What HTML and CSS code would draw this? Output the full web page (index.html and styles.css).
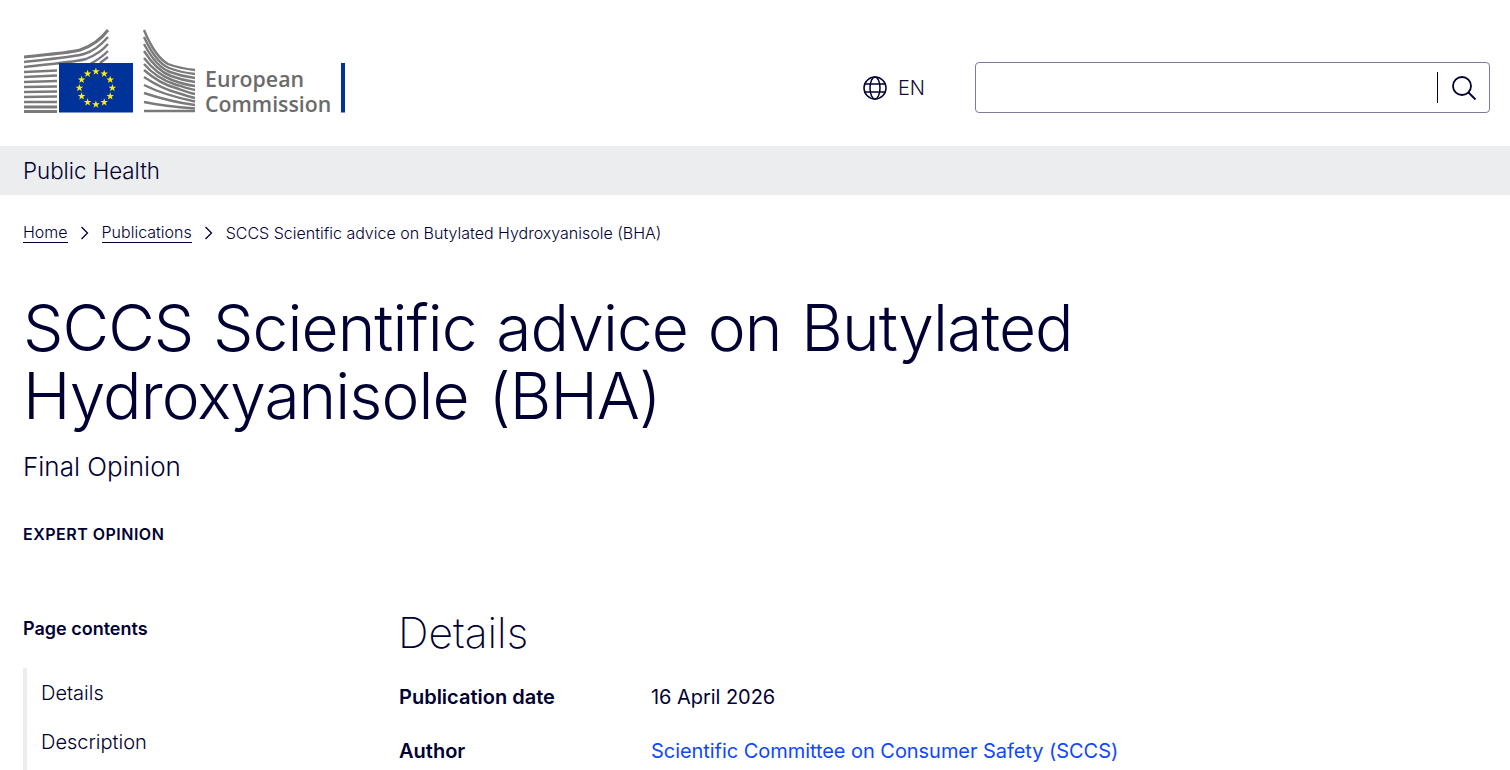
FILE: index.html
```html
<!DOCTYPE html>
<html lang="en">
<head>
  <meta charset="UTF-8">
  <title>SCCS Scientific advice on Butylated Hydroxyanisole (BHA)</title>
  <link rel="stylesheet" href="styles.css">
</head>
<body>

  <header class="site-header">
    <svg class="logo" width="322" height="92" viewBox="0 0 322 92">
      <defs>
        <path id="star" d="M0 -4L.94 -1.290L3.800 -1.240L1.520 .49L2.350 3.240L0 1.600L-2.350 3.240L-1.520 .49L-3.800 -1.240L-.94 -1.290z"/>
      </defs>
      <g fill="none" stroke="#7a7a7a" stroke-width="2.400">
        <path stroke-width="3" d="M0 28 C25 25 45 24 56 21 C68 17 78 9 84 1"/>
        <path d="M0 33 C25 30 50 28 60 25 C70 22 78 15 84 8"/>
        <path d="M0 38 C25 35 52 33 62 30 C72 26 79 21 84 15"/>
        <path d="M66 35 C74 31 80 26 84 22"/>
        <path d="M76 34 L84 28"/>
        <path d="M0 43 L33 41.500"/>
        <path d="M0 48 L33 46.500"/>
        <path d="M0 53 L33 52"/>
        <path d="M0 58 L33 57.500"/>
        <path d="M0 63 L33 62.500"/>
        <path d="M0 68 L33 67.500"/>
        <path d="M0 73 H33"/>
        <path stroke-width="3" d="M0 78 H33"/>
        <path stroke-width="3" d="M0 82.500 H33"/>
        <path d="M120 1 C127 18 135 30 144 35 C152 38 162 40 171 41"/>
        <path d="M120 8 C127 23 135 35 145 39 C153 42 162 44 171 45"/>
        <path d="M120 15 C127 28 135 39 146 43 C154 46 162 48 171 49"/>
        <path d="M120 22 C127 33 136 43 147 47 C155 50 163 52 171 53"/>
        <path d="M120 29 C127 38 137 47 148 51 C156 54 163 56 171 57"/>
        <path d="M120 35 C127 43 138 51 150 55 C157 57 164 60 171 61"/>
        <path d="M120 41 C128 48 140 56 152 59 C158 61 165 64 171 65"/>
        <path d="M120 48 C129 54 142 61 154 64 C160 66 166 68 171 69"/>
        <path d="M120 56 C130 61 144 67 171 72.500"/>
        <path d="M120 64 C132 68 148 73 171 76"/>
        <path d="M120 73 C134 76 150 78 171 79.500"/>
        <path stroke-width="2.600" d="M120 82 H171"/>
      </g>
      <rect x="35" y="34" width="74" height="49.500" fill="#003399"/>
      <g fill="#ffed00">
        <use href="#star" x="71.900" y="42.500"/>
        <use href="#star" x="80.200" y="44.700"/>
        <use href="#star" x="86.200" y="50.700"/>
        <use href="#star" x="88.400" y="59"/>
        <use href="#star" x="86.200" y="67.300"/>
        <use href="#star" x="80.200" y="73.300"/>
        <use href="#star" x="71.900" y="75.500"/>
        <use href="#star" x="63.600" y="73.300"/>
        <use href="#star" x="57.600" y="67.300"/>
        <use href="#star" x="55.400" y="59"/>
        <use href="#star" x="57.600" y="50.700"/>
        <use href="#star" x="63.600" y="44.700"/>
      </g>
      <text class="logo-text" x="181" y="58">European</text>
      <text class="logo-text" x="181" y="83">Commission</text>
      <rect x="317" y="34" width="4" height="49.500" fill="#003399"/>
    </svg>

    <div class="header-tools">
      <div class="lang">
        <svg width="24" height="24" viewBox="0 0 24 24" fill="none" stroke="#000032" stroke-width="1.500">
          <circle cx="12" cy="12" r="11"/>
          <ellipse cx="12" cy="12" rx="5" ry="11"/>
          <path d="M1.500 8H22.500M1.500 16H22.500"/>
        </svg>
        <span>EN</span>
      </div>
      <div class="search-box">
        <span class="search-divider"></span>
        <svg width="26" height="26" viewBox="0 0 26 26" fill="none" stroke="#000032" stroke-width="1.800">
          <circle cx="11" cy="11" r="9"/>
          <path d="M17.500 17.500L24.500 24.500"/>
        </svg>
      </div>
    </div>
  </header>

  <div class="site-bar">Public Health</div>

  <nav class="breadcrumb">
    <a href="#">Home</a>
    <svg class="crumb-arrow" width="10" height="14" viewBox="0 0 10 14"><path d="M1.500 1L7.500 7L1.500 13"/></svg>
    <a href="#">Publications</a>
    <svg class="crumb-arrow" width="10" height="14" viewBox="0 0 10 14"><path d="M1.500 1L7.500 7L1.500 13"/></svg>
    <span>SCCS Scientific advice on Butylated Hydroxyanisole (BHA)</span>
  </nav>

  <section class="page-head">
    <h1>SCCS Scientific advice on Butylated Hydroxyanisole (BHA)</h1>
    <p class="subtitle">Final Opinion</p>
    <p class="meta">EXPERT OPINION</p>
  </section>

  <div class="page-body">
    <aside class="toc">
      <h2>Page contents</h2>
      <ul>
        <li>Details</li>
        <li>Description</li>
      </ul>
    </aside>
    <main class="content">
      <h2>Details</h2>
      <dl>
        <dt>Publication date</dt>
        <dd>16 April 2026</dd>
        <dt>Author</dt>
        <dd><a href="#">Scientific Committee on Consumer Safety (SCCS)</a></dd>
      </dl>
    </main>
  </div>

</body>
</html>
```

FILE: styles.css
```css
html, body {
  height: 770px;
  overflow: hidden;
}
body {
  margin: 0;
  font-family: Inter, "Liberation Sans", sans-serif;
  color: #000032;
  background: #fff;
}
.site-header {
  display: flex;
  justify-content: space-between;
  align-items: flex-start;
  height: 146px;
  padding: 29px 20px 0 24px;
  box-sizing: border-box;
}
.logo {
  display: block;
}
.logo-text {
  font-family: "Open Sans", sans-serif;
  font-size: 21.300px;
  font-weight: 600;
  fill: #6b6b6b;
}
.header-tools {
  display: flex;
  align-items: center;
  gap: 50px;
  margin-top: 33px;
}
.lang {
  display: flex;
  align-items: center;
  gap: 11px;
  font-size: 20px;
  font-weight: 300;
  color: #1a0a3c;
}
.lang svg {
  display: block;
}
.search-box {
  display: flex;
  align-items: center;
  justify-content: flex-end;
  gap: 13px;
  width: 515px;
  height: 51px;
  box-sizing: border-box;
  padding-right: 12px;
  border: 1px solid #7f7c99;
  border-radius: 4px;
}
.search-divider {
  width: 1px;
  height: 31px;
  background: #000032;
}
.site-bar {
  height: 49px;
  line-height: 50px;
  padding-left: 23px;
  background: #ecedef;
  font-size: 22.300px;
  font-weight: 300;
}
.breadcrumb {
  display: flex;
  align-items: center;
  gap: 12px;
  padding: 27px 0 0 23px;
  font-size: 16px;
  line-height: 20px;
  font-weight: 300;
}
.breadcrumb a {
  color: inherit;
  text-decoration: none;
  border-bottom: 1px solid #000032;
}
.crumb-arrow {
  fill: none;
  stroke: #000032;
  stroke-width: 1.300;
}
.page-head {
  padding: 51px 0 0 23px;
}
h1 {
  margin: 0;
  max-width: 1100px;
  font-size: 64px;
  line-height: 68px;
  font-weight: 300;
  letter-spacing: -0.930px;
  word-spacing: 2.700px;
}
.subtitle {
  margin: 21px 0 0;
  font-size: 26px;
  line-height: 32px;
  font-weight: 300;
}
.meta {
  margin: 41px 0 0;
  font-size: 16px;
  line-height: 20px;
  font-weight: 600;
  letter-spacing: 0.500px;
}
.page-body {
  display: flex;
  padding: 0 0 0 23px;
  margin-top: 52px;
}
.toc {
  width: 376px;
  flex: none;
}
.toc h2 {
  margin: 21px 0 0;
  font-size: 18px;
  line-height: 24px;
  font-weight: 600;
}
.toc ul {
  list-style: none;
  margin: 27px 0 0;
  padding: 0 0 20px 14px;
  border-left: 4px solid #ecedef;
}
.toc li {
  font-size: 20px;
  font-weight: 300;
  line-height: 24px;
  padding: 13px 0 12px;
}
.content {
  padding-top: 9px;
}
.content h2 {
  margin: 0 0 0 -1px;
  font-size: 42.500px;
  line-height: 56px;
  font-weight: 200;
}
dl {
  display: grid;
  grid-template-columns: 252px 1fr;
  row-gap: 26px;
  margin: 22px 0 0;
  font-size: 20px;
  line-height: 28px;
}
dt {
  font-weight: 600;
}
dd {
  margin: 0;
  font-weight: 400;
  letter-spacing: -0.050px;
}
dd a {
  color: #0f47ff;
  text-decoration: none;
}
```
